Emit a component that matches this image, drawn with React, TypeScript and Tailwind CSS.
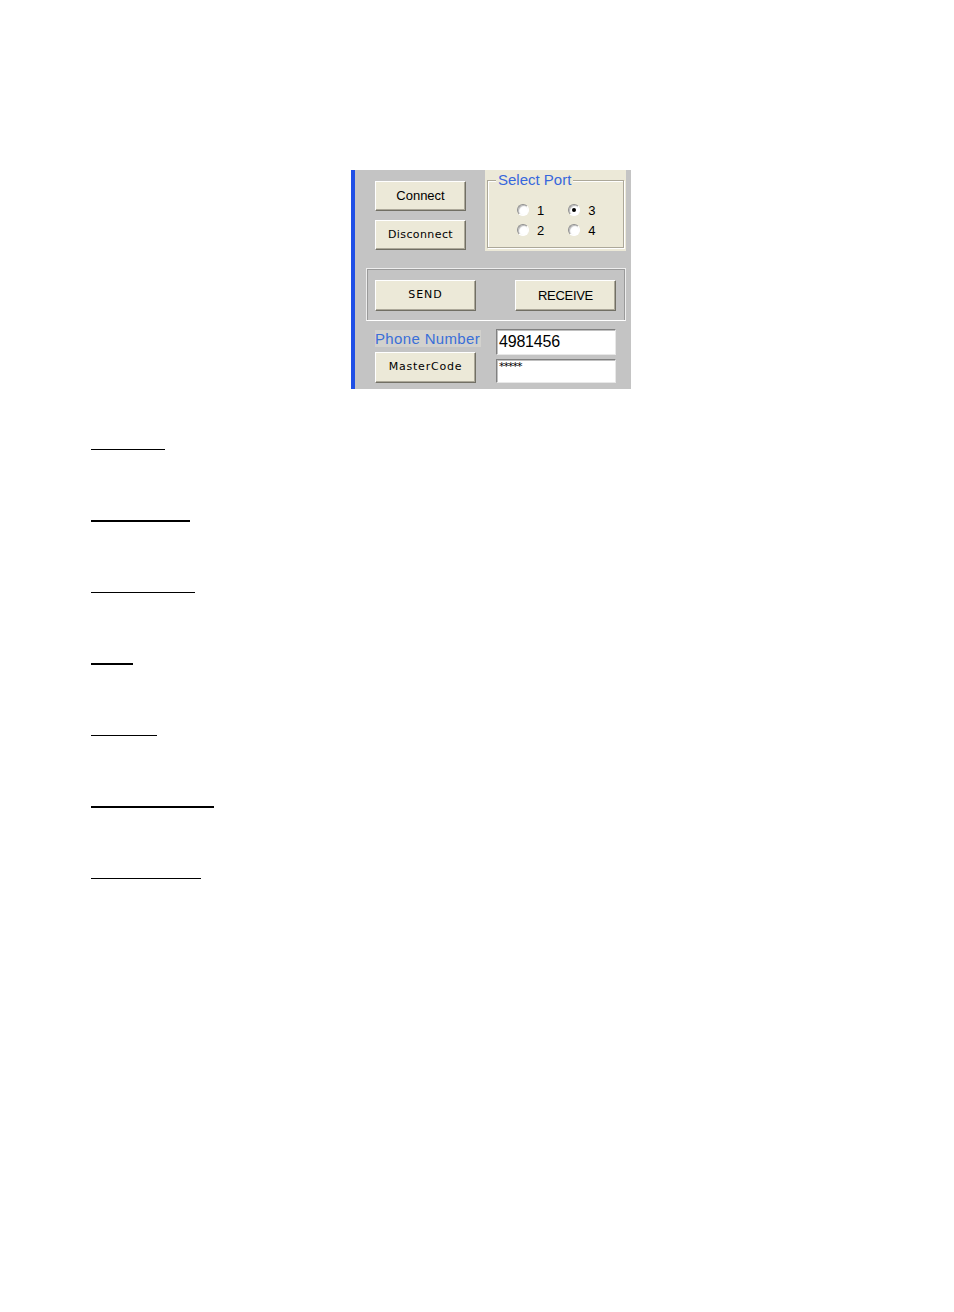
import React from "react";

const btnBase =
  "flex items-center justify-center bg-[#ece9d8] border border-t-white border-l-white border-b-[#716f64] border-r-[#716f64] shadow-[inset_-1px_-1px_0_#aca899] text-black";

function Radio({ checked, label }: { checked?: boolean; label: string }) {
  return (
    <div className="flex items-center h-[20px]">
      <div className="w-[12px] h-[12px] rounded-full bg-white border border-t-[#8f8f8f] border-l-[#8f8f8f] border-b-white border-r-white shadow-[inset_1px_1px_1px_#b8b8b8] flex items-center justify-center">
        {checked && <div className="w-[4px] h-[4px] rounded-full bg-black" />}
      </div>
      <span className="ml-[8px] text-[13px] leading-none text-black font-['Liberation_Sans',Arial,sans-serif]">
        {label}
      </span>
    </div>
  );
}

export default function App() {
  return (
    <div className="w-[954px] min-h-[1312px] bg-white font-['Liberation_Sans',Arial,sans-serif]">
      <div className="pt-[170px] pl-[351px]">
        {/* Panel */}
        <div className="flex w-[280px] h-[219px] bg-[#c4c4c4]">
          <div className="w-[4px] h-full bg-[#1f4fe6]" />
          <div className="flex flex-col w-[276px]">
            {/* Row 1 */}
            <div className="flex h-[81px]">
              <div className="w-[130px] pl-[20px] pt-[11px] flex flex-col gap-[9px]">
                <div className={`${btnBase} w-[91px] h-[30px] text-[13px]`}>Connect</div>
                <div
                  className={`${btnBase} w-[91px] h-[30px] text-[11px] tracking-[0.4px] font-['DejaVu_Sans',Verdana,sans-serif]`}
                >
                  Disconnect
                </div>
              </div>
              <div className="w-[141px] h-[81px] bg-[#ece9d8] pt-[10px] px-[2px]">
                <div className="relative h-[68px] border border-[#aca899] shadow-[inset_1px_1px_0_#ffffff,1px_1px_0_#ffffff]">
                  <div className="absolute left-[8px] top-[-9px] px-[2px] bg-[#ece9d8] text-[15px] leading-[16px] text-[#3767dc]">
                    Select Port
                  </div>
                  <div className="flex pl-[29px] pt-[19px] gap-[24px]">
                    <div className="flex flex-col">
                      <Radio label="1" />
                      <Radio label="2" />
                    </div>
                    <div className="flex flex-col">
                      <Radio checked label="3" />
                      <Radio label="4" />
                    </div>
                  </div>
                </div>
              </div>
            </div>

            {/* Row 2 */}
            <div className="mt-[17px] ml-[11px] w-[260px] h-[53px] border border-t-[#eeeeee] border-l-[#eeeeee] border-b-white border-r-[#eeeeee] shadow-[inset_1px_1px_0_#9a9a9a,inset_-1px_0_0_#9a9a9a] flex items-start pt-[11px] pl-[8px]">
              <div
                className={`${btnBase} w-[101px] h-[31px] text-[11px] tracking-[1px] font-['DejaVu_Sans',Verdana,sans-serif]`}
              >
                SEND
              </div>
              <div className={`${btnBase} ml-[39px] w-[101px] h-[31px] text-[13px] tracking-[-0.3px]`}>
                RECEIVE
              </div>
            </div>

            {/* Row 3 */}
            <div className="flex mt-[8px]">
              <div className="w-[141px] pl-[20px] flex flex-col">
                <div className="mt-[1px] w-[106px] h-[17px] bg-[#d2d1cd] text-[15px] leading-[17px] tracking-[0.35px] text-[#3a6fd8] whitespace-nowrap">
                  Phone Number
                </div>
                <div
                  className={`${btnBase} mt-[5px] w-[101px] h-[31px] text-[11px] tracking-[0.8px] font-['DejaVu_Sans',Verdana,sans-serif]`}
                >
                  MasterCode
                </div>
              </div>
              <div className="flex flex-col gap-[4px]">
                <div className="w-[120px] h-[26px] bg-white border border-t-[#808080] border-l-[#808080] border-b-[#e8e8e8] border-r-[#e8e8e8] shadow-[inset_1px_1px_0_#c0c0c0] flex items-center pl-[2px] text-[16px] text-black tracking-[-0.2px]">
                  4981456
                </div>
                <div className="w-[120px] h-[24px] bg-white border border-t-[#808080] border-l-[#808080] border-b-[#e8e8e8] border-r-[#e8e8e8] shadow-[inset_1px_1px_0_#c0c0c0] pl-[2px] pt-[2px] text-[11px] leading-[10px] tracking-[-1px] text-black font-['DejaVu_Sans',sans-serif]">
                  *****
                </div>
              </div>
            </div>
          </div>
        </div>
      </div>

      {/* Blank lines */}
      <div className="pl-[91px] flex flex-col">
        <div className="mt-[60px] w-[74px] h-px bg-black" />
        <div className="mt-[70px] w-[99px] h-[2px] bg-black" />
        <div className="mt-[70px] w-[104px] h-px bg-black" />
        <div className="mt-[70px] w-[42px] h-[2px] bg-black" />
        <div className="mt-[70px] w-[66px] h-px bg-black" />
        <div className="mt-[70px] w-[123px] h-[2px] bg-black" />
        <div className="mt-[70px] w-[110px] h-px bg-black" />
      </div>
    </div>
  );
}
